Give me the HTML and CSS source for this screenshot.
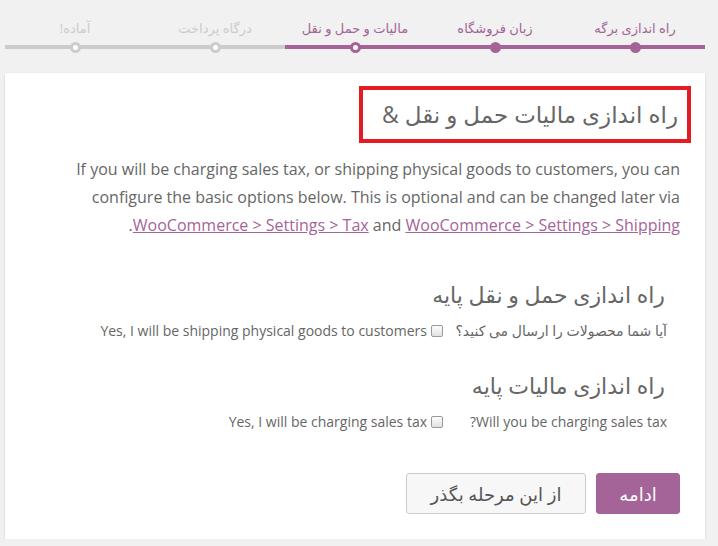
FILE: index.html
```html
<!DOCTYPE html>
<html lang="fa" dir="rtl">
<head>
<meta charset="utf-8">
<title>راه اندازی</title>
<link rel="stylesheet" href="styles.css">
</head>
<body>
<ol class="steps">
  <li class="step done"><span class="step-label">راه اندازی برگه</span><span class="track"></span></li>
  <li class="step done"><span class="step-label">زبان فروشگاه</span><span class="track"></span></li>
  <li class="step active"><span class="step-label">مالیات و حمل و نقل</span><span class="track"></span></li>
  <li class="step"><span class="step-label">درگاه پرداخت</span><span class="track"></span></li>
  <li class="step"><span class="step-label">آماده!</span><span class="track"></span></li>
</ol>
<div class="card">
  <h1 class="title"><span class="title-box">راه اندازی مالیات حمل و نقل &amp;</span></h1>
  <p class="intro">If you will be charging sales tax, or shipping physical goods to customers, you can configure the basic options below. This is optional and can be changed later via <a href="#">WooCommerce &gt; Settings &gt; Tax</a> and <a href="#">WooCommerce &gt; Settings &gt; Shipping</a>.</p>
  <div class="section">
    <h2 class="section-title">راه اندازی حمل و نقل پایه</h2>
    <div class="row">
      <div class="row-label">آیا شما محصولات را ارسال می کنید؟</div>
      <label class="row-field"><input type="checkbox" class="check"><span>Yes, I will be shipping physical goods to customers</span></label>
    </div>
  </div>
  <div class="section second">
    <h2 class="section-title">راه اندازی مالیات پایه</h2>
    <div class="row row2">
      <div class="row-label">Will you be charging sales tax?</div>
      <label class="row-field"><input type="checkbox" class="check"><span>Yes, I will be charging sales tax</span></label>
    </div>
  </div>
  <div class="actions">
    <button class="btn btn-primary">ادامه</button>
    <button class="btn btn-secondary">از این مرحله بگذر</button>
  </div>
</div>
</body>
</html>
```
FILE: styles.css
```css
html, body {
  margin: 0;
  padding: 0;
}
body {
  background: #f1f1f1;
  direction: rtl;
  font-family: "Open Sans", "DejaVu Sans", sans-serif;
  color: #666;
}
.steps {
  list-style: none;
  margin: 0 13px 0 5px;
  padding: 18px 0 0;
  display: flex;
}
.step {
  flex: 1;
  display: flex;
  flex-direction: column;
  align-items: stretch;
}
.step-label {
  display: block;
  text-align: center;
  font-size: 13px;
  line-height: 20px;
  height: 20px;
  color: #ccc;
  white-space: nowrap;
}
.step.done .step-label,
.step.active .step-label {
  color: #a46497;
}
.track {
  display: block;
  position: relative;
  height: 4px;
  margin-top: 7px;
  background: #ccc;
}
.step.done .track,
.step.active .track {
  background: #a46497;
}
.track::after {
  content: "";
  position: absolute;
  left: 50%;
  top: 50%;
  width: 5px;
  height: 5px;
  margin: -5.5px 0 0 -5.5px;
  border: 3px solid #ccc;
  border-radius: 50%;
  background: #fff;
}
.step.done .track::after {
  background: #a46497;
  border-color: #a46497;
}
.step.active .track::after {
  border-color: #a46497;
}
.card {
  margin: 24px 13px 0 5px;
  background: #fff;
  padding: 13px 25px 25px;
  box-shadow: 0 1px 3px rgba(0, 0, 0, 0.13);
}
.title {
  margin: 0;
  font-weight: normal;
  font-size: 23px;
  line-height: 49px;
  color: #666;
}
.title-box {
  display: block;
  box-sizing: border-box;
  width: 332px;
  height: 57px;
  margin-right: -11px;
  padding-right: 9px;
  border: 4px solid #e31b23;
  white-space: nowrap;
}
.intro {
  margin: 12px 0 0;
  font-size: 16px;
  line-height: 28px;
  color: #666;
}
.intro a {
  color: #a46497;
  text-decoration: underline;
}
.section {
  margin: 40px 13px 0 0;
}
.section.second {
  margin-top: 29px;
}
.section-title {
  margin: 0 2px 0 0;
  font-weight: normal;
  font-size: 22px;
  line-height: 30px;
  color: #666;
}
.row {
  display: flex;
  align-items: center;
  margin-top: 12px;
  font-size: 14px;
  line-height: 20px;
  color: #666;
}
.row-label {
  width: 224px;
  flex: none;
}
.row-field {
  display: flex;
  align-items: center;
  gap: 4px;
}
.check {
  appearance: none;
  -webkit-appearance: none;
  margin: 0;
  width: 12px;
  height: 12px;
  box-sizing: border-box;
  border: 1px solid #9a9a9a;
  border-radius: 2px;
  background: linear-gradient(#fdfdfd, #e2e2e2);
}
.actions {
  display: flex;
  gap: 10px;
  margin-top: 41px;
  margin-left: -1px;
}
.btn {
  height: 41px;
  box-sizing: border-box;
  font-family: "Open Sans", "DejaVu Sans", sans-serif;
  font-size: 18px;
  border-radius: 3px;
  cursor: pointer;
}
.btn-primary {
  width: 84px;
  background: #a46497;
  border: 1px solid #a46497;
  color: #fff;
}
.btn-secondary {
  width: 180px;
  background: #f7f7f7;
  border: 1px solid #ccc;
  color: #555;
}
```
